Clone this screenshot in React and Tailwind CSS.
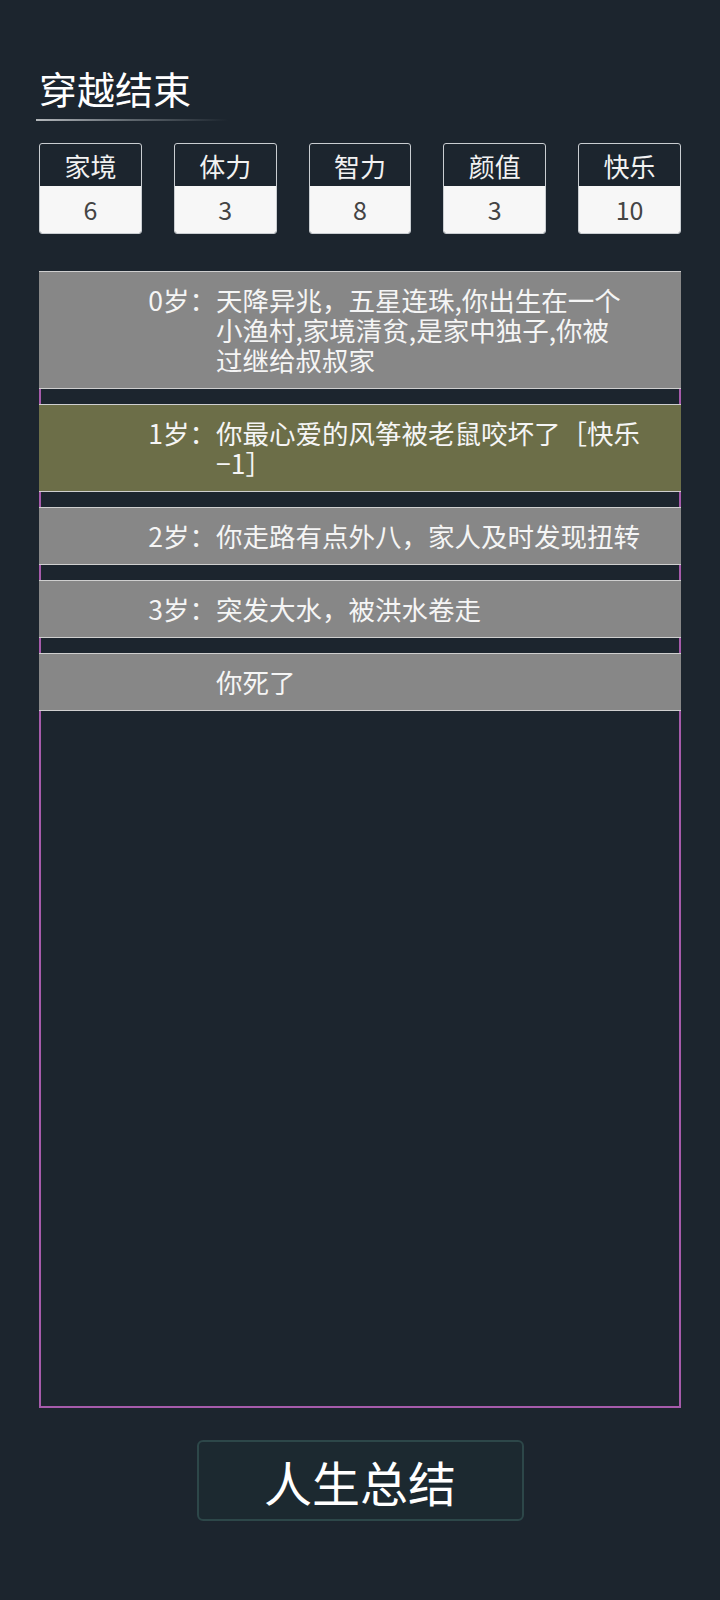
import React from "react";

const stats = [
  { label: "家境", value: 6 },
  { label: "体力", value: 3 },
  { label: "智力", value: 8 },
  { label: "颜值", value: 3 },
  { label: "快乐", value: 10 },
];

// lines are broken as the game shows them
const events = [
  { age: "0岁：", lines: ["天降异兆，五星连珠,你出生在一个", "小渔村,家境清贫,是家中独子,你被", "过继给叔叔家"] },
  { age: "1岁：", lines: ["你最心爱的风筝被老鼠咬坏了［快乐", "−1］"], good: true },
  { age: "2岁：", lines: ["你走路有点外八，家人及时发现扭转"] },
  { age: "3岁：", lines: ["突发大水，被洪水卷走"] },
  { age: "", lines: ["你死了"] },
];

const font = { fontFamily: '"Noto Sans CJK SC", "Noto Sans", sans-serif' };

export default function App() {
  return (
    <div className="min-h-[1600px] w-[720px] bg-[#1c252e] text-white" style={font}>
      <div className="px-[39px] pt-[62px]">
        {/* title */}
        <h1 className="text-[38px] leading-[52px] font-normal">穿越结束</h1>
        <div className="mt-[5px] -ml-[3px] h-[2px] w-[192px] bg-gradient-to-r from-[#b4b8bc] via-[#5e666d] to-transparent" />

        {/* stats */}
        <div className="mt-[22px] grid grid-cols-5 gap-[32px]">
          {stats.map((s) => (
            <div key={s.label} className="rounded-[3px] border border-[#c9cdd1] overflow-hidden">
              <div className="h-[42px] flex items-center justify-center text-[26px] text-[#f2f2f2]">
                {s.label}
              </div>
              <div className="h-[47px] bg-[#f7f7f7] flex items-center justify-center text-[25px] text-[#444]">
                {s.value}
              </div>
            </div>
          ))}
        </div>

        {/* events */}
        <div className="mt-[37px] h-[1137px] border-x-2 border-b-2 border-[#a65bab]">
          <div className="-mx-[2px] flex flex-col gap-[15px]">
            {events.map((e, i) => (
              <div
                key={i}
                className={
                  "flex border-y border-[#cfcfcf] py-[13px] text-[26.5px] leading-[30px] text-[#f5f5f5] " +
                  (e.good ? "bg-[#6c6e48]" : "bg-[#878787]")
                }
              >
                <div className="w-[177px] shrink-0 text-right whitespace-nowrap">{e.age}</div>
                <div className="flex flex-col">
                  {e.lines.map((l, j) => (
                    <span key={j} className="whitespace-nowrap">{l}</span>
                  ))}
                </div>
              </div>
            ))}
          </div>
        </div>

        {/* button */}
        <div className="mt-[32px] flex justify-center">
          <button className="w-[327px] h-[81px] rounded-[6px] border-2 border-[#2d4749] bg-[#1c2930] text-[48px] leading-none text-white">
            人生总结
          </button>
        </div>
      </div>
    </div>
  );
}
